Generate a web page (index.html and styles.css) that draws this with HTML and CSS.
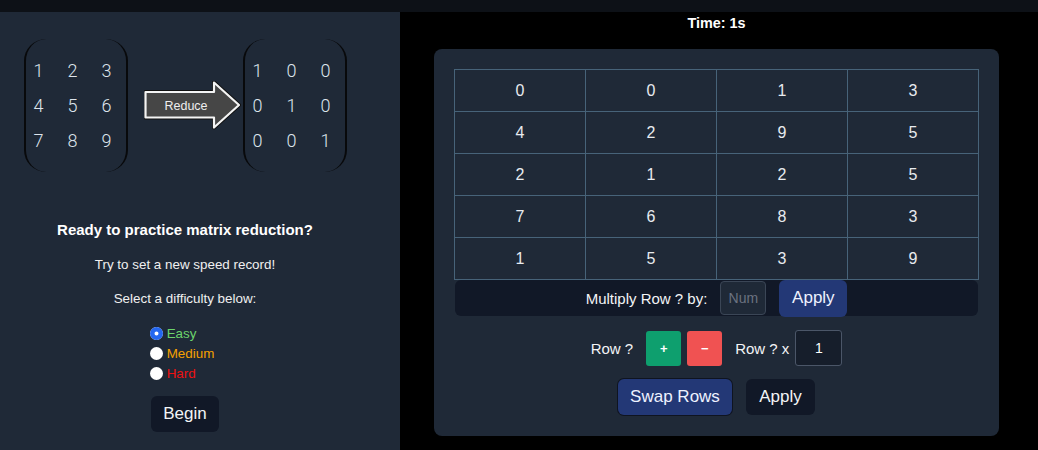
FILE: index.html
```html
<!DOCTYPE html>
<html lang="en">
<head>
<meta charset="utf-8">
<title>Matrix Reduction Practice</title>
<link rel="stylesheet" href="styles.css">
</head>
<body>
<div class="topbar"></div>
<div class="main">
  <aside class="intro">
    <div class="figure">
      <div class="matrix">
        <span>1</span><span>2</span><span>3</span>
        <span>4</span><span>5</span><span>6</span>
        <span>7</span><span>8</span><span>9</span>
      </div>
      <svg class="arrow" width="97" height="49" viewBox="0 0 97 49">
        <polygon points="1.5,11 70,11 70,1.5 95,24 70,46.5 70,36.5 1.5,36.5" fill="#464646" stroke="#111" stroke-width="4" stroke-linejoin="round"/>
        <polygon points="1.5,11 70,11 70,1.5 95,24 70,46.5 70,36.5 1.5,36.5" fill="#464646" stroke="#f4f4f4" stroke-width="2.2" stroke-linejoin="round"/>
        <text x="42" y="28.5" text-anchor="middle" class="arrow-text">Reduce</text>
      </svg>
      <div class="matrix">
        <span>1</span><span>0</span><span>0</span>
        <span>0</span><span>1</span><span>0</span>
        <span>0</span><span>0</span><span>1</span>
      </div>
    </div>
    <h2 class="headline">Ready to practice matrix reduction?</h2>
    <p class="sub first">Try to set a new speed record!</p>
    <p class="sub">Select a difficulty below:</p>
    <div class="levels">
      <label class="level easy"><input type="radio" name="lvl" checked><span>Easy</span></label>
      <label class="level medium"><input type="radio" name="lvl"><span>Medium</span></label>
      <label class="level hard"><input type="radio" name="lvl"><span>Hard</span></label>
    </div>
    <button class="btn btn-dark begin">Begin</button>
  </aside>
  <section class="game">
    <div class="game-col">
      <div class="timer">Time: 1s</div>
      <div class="card">
        <table class="grid">
          <tr><td>0</td><td>0</td><td>1</td><td>3</td></tr>
          <tr><td>4</td><td>2</td><td>9</td><td>5</td></tr>
          <tr><td>2</td><td>1</td><td>2</td><td>5</td></tr>
          <tr><td>7</td><td>6</td><td>8</td><td>3</td></tr>
          <tr><td>1</td><td>5</td><td>3</td><td>9</td></tr>
        </table>
        <div class="mult-bar">
          <span class="lbl">Multiply Row ? by:</span>
          <input class="num" type="text" placeholder="Num">
          <button class="btn btn-blue apply-sm">Apply</button>
        </div>
        <div class="ops-row">
          <span class="lbl">Row ?</span>
          <div class="sign-group">
            <button class="sign plus">+</button>
            <button class="sign minus">&minus;</button>
          </div>
          <div class="factor">
            <span class="lbl">Row ? x</span>
            <input class="factor-in" type="text" value="1">
          </div>
        </div>
        <div class="ops-row actions">
          <button class="btn btn-blue swap">Swap Rows</button>
          <button class="btn btn-dark apply">Apply</button>
        </div>
      </div>
    </div>
  </section>
</div>
</body>
</html>
```

FILE: styles.css
```css
* { box-sizing: border-box; }
html, body { margin: 0; padding: 0; }
body {
  width: 1038px;
  height: 450px;
  overflow: hidden;
  background: #000;
  font-family: "Liberation Sans", Arial, sans-serif;
  color: #fff;
}
.topbar { height: 12px; background: #0d1117; }
.main { display: flex; height: 438px; }

.intro {
  width: 400px;
  background: #1f2937;
  padding: 0 30px 0 0;
  display: flex;
  flex-direction: column;
  align-items: center;
}
.figure {
  margin-top: 27px;
  display: flex;
  align-items: center;
  height: 133px;
}
.matrix {
  width: 104px;
  height: 133px;
  border-left: 2px solid #08090b;
  border-right: 2px solid #08090b;
  border-radius: 22px;
  display: grid;
  grid-template-columns: repeat(3, 34px);
  grid-template-rows: repeat(3, 35px);
  justify-content: center;
  align-content: center;
  justify-items: center;
  align-items: center;
  padding-right: 6px;
  font-family: Roboto, "DejaVu Sans", sans-serif;
  font-weight: 300;
  font-size: 18px;
  color: #dde4ec;
}
.arrow { margin: 0 2px 0 16px; display: block; }
.arrow-text { font-family: "Liberation Sans", Arial, sans-serif; font-size: 12.5px; fill: #eeeeee; }

.headline {
  margin: 49px 0 0;
  font-size: 15px;
  line-height: 18px;
  font-weight: 700;
}
.sub { margin: 18px 0 0; font-size: 13.4px; line-height: 16px; color: #f0f0f0; }
.levels {
  margin: 16px 6px 0 0;
  display: flex;
  flex-direction: column;
}
.level {
  display: flex;
  align-items: center;
  gap: 4px;
  height: 20px;
  font-size: 13.4px;
}
.level input {
  appearance: none;
  -webkit-appearance: none;
  margin: 0;
  width: 13px;
  height: 13px;
  border-radius: 50%;
  background: #fff;
  border: none;
}
.level input:checked {
  box-shadow: inset 0 0 0 4.5px #2467f0;
}
.easy span { color: #6cd46c; }
.medium span { color: #f5a000; }
.hard span { color: #ee1111; }

.btn {
  border: none;
  border-radius: 6px;
  font-family: "Liberation Sans", Arial, sans-serif;
  font-size: 17px;
  color: #f3f4f6;
  height: 36px;
  padding: 0;
}
.btn-dark { background: #111827; }
.btn-blue { background: #233876; color: #eef2ff; }
.begin { margin-top: 13px; width: 68px; }

.game { flex: 1; }
.game-col { width: 565px; margin-left: 34px; display: flex; flex-direction: column; }
.timer {
  margin-top: 3px;
  text-align: center;
  font-weight: 700;
  font-size: 14.4px;
  line-height: 16px;
}
.card {
  margin-top: 18px;
  height: 387px;
  background: #1f2937;
  border-radius: 8px;
  padding: 20px 20px;
  display: flex;
  flex-direction: column;
}
.grid {
  width: 525px;
  border-collapse: collapse;
  table-layout: fixed;
}
.grid td {
  height: 42px;
  padding: 0;
  border: 1px solid #476379;
  text-align: center;
  font-size: 16px;
  color: #e8ebef;
}
.mult-bar {
  margin: 0 1px;
  height: 36px;
  background: #111827;
  border-radius: 6px;
  display: flex;
  align-items: center;
  justify-content: center;
  gap: 13px;
}
.lbl { font-size: 15px; color: #f3f4f6; }
.num {
  width: 46px;
  height: 34px;
  background: #1f2937;
  border: 1px solid #3b4656;
  border-radius: 4px;
  color: #fff;
  text-align: center;
  font-family: "Liberation Sans", Arial, sans-serif;
  font-size: 14px;
  padding: 0;
}
.num::placeholder { color: #6b7280; }
.apply-sm { width: 68px; height: 37px; }

.ops-row {
  margin-top: 14px;
  display: flex;
  align-items: center;
  justify-content: center;
  gap: 13px;
}
.sign-group { display: flex; gap: 6px; }
.sign {
  width: 35px;
  height: 35px;
  border: none;
  border-radius: 3px;
  color: #fff;
  font-family: "Liberation Sans", Arial, sans-serif;
  font-size: 13px;
  font-weight: 700;
  padding: 0;
}
.plus { background: #0e9f6e; }
.minus { background: #f05252; }
.factor { display: flex; align-items: center; gap: 6px; }
.factor-in {
  width: 47px;
  height: 36px;
  background: #161e2b;
  border: 1px solid #4b5668;
  border-radius: 3px;
  color: #fff;
  text-align: center;
  font-family: "Liberation Sans", Arial, sans-serif;
  font-size: 14px;
  padding: 0;
}
.actions { margin-top: 13px; gap: 14px; }
.swap { width: 114px; box-shadow: 0 0 0 1px #0f1420; }
.apply { width: 69px; }
```
